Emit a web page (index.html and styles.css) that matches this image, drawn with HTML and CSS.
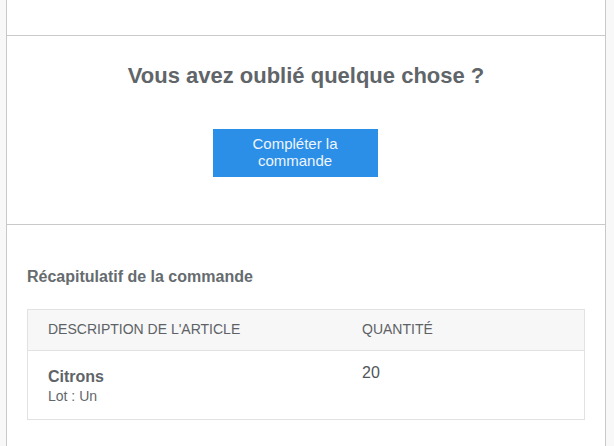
FILE: index.html
```html
<!DOCTYPE html>
<html lang="fr">
<head>
<meta charset="utf-8">
<title>Vous avez oublié quelque chose ?</title>
<link rel="stylesheet" href="styles.css">
</head>
<body>
<div class="email">
  <div class="section top"></div>
  <div class="section hero">
    <h1 class="hero-title">Vous avez oublié quelque chose ?</h1>
    <div class="btn-wrap">
      <a class="btn" href="#">Compléter la<br>commande</a>
    </div>
  </div>
  <div class="section summary">
    <h2 class="summary-title">Récapitulatif de la commande</h2>
    <div class="table">
      <div class="row head">
        <div class="cell">DESCRIPTION DE L'ARTICLE</div>
        <div class="cell">QUANTITÉ</div>
      </div>
      <div class="row item">
        <div class="cell desc">
          <div class="item-name">Citrons</div>
          <div class="item-meta">Lot : Un</div>
        </div>
        <div class="cell qty">20</div>
      </div>
    </div>
  </div>
</div>
</body>
</html>
```

FILE: styles.css
```css
html, body {
  margin: 0;
  padding: 0;
  background: #f8f8f8;
  font-family: "Liberation Sans", Arial, sans-serif;
}

.email {
  margin-left: 6px;
  width: 600px;
  box-sizing: border-box;
  min-height: 446px;
  background: #ffffff;
  border-left: 1px solid #c9c9c9;
  border-right: 1px solid #c9c9c9;
}

.section {
  border-bottom: 1px solid #c9c9c9;
}

.top {
  height: 35px;
}

.hero {
  padding: 27px 0 47px;
  text-align: center;
}

.hero-title {
  margin: 0;
  font-size: 22px;
  line-height: 26px;
  font-weight: bold;
  color: #5f6569;
}

.btn-wrap {
  margin-top: 40px;
  padding-right: 22px;
  display: flex;
  justify-content: center;
}

.btn {
  display: block;
  width: 165px;
  box-sizing: border-box;
  padding: 6px 0 8px;
  background: #2b8fe8;
  color: #eef5fd;
  font-size: 15px;
  line-height: 17px;
  text-decoration: none;
  text-align: center;
}

.summary {
  border-bottom: none;
  padding: 43px 20px 0;
}

.summary-title {
  margin: 0 0 23px;
  font-size: 16px;
  line-height: 18px;
  font-weight: bold;
  color: #656b6f;
}

.table {
  border: 1px solid #e2e2e2;
}

.row {
  display: grid;
  grid-template-columns: 314px 1fr;
}

.cell {
  padding: 0 20px;
}

.head {
  background: #f7f7f7;
  border-bottom: 1px solid #e2e2e2;
}

.head .cell {
  padding-top: 11px;
  padding-bottom: 13px;
  font-size: 14px;
  line-height: 16px;
  color: #5d6266;
}

.item .desc {
  padding-top: 16px;
  padding-bottom: 14px;
}

.item-name {
  font-size: 16px;
  line-height: 20px;
  font-weight: bold;
  color: #5f6468;
}

.item-meta {
  font-size: 14px;
  line-height: 18px;
  color: #62676b;
}

.item .qty {
  padding-top: 12px;
  font-size: 16px;
  line-height: 20px;
  color: #505559;
}
```
